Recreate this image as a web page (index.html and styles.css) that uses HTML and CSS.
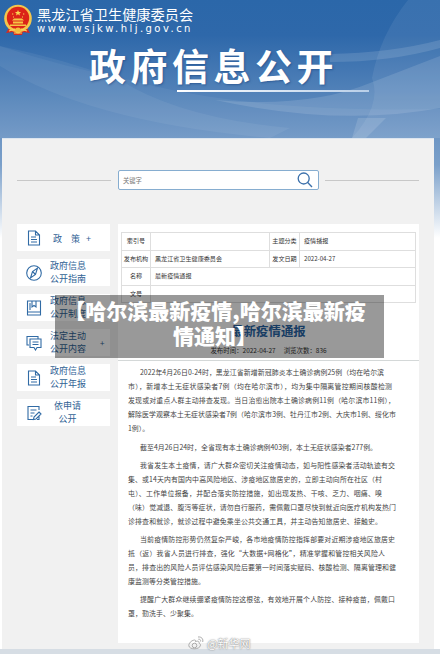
FILE: index.html
```html
<!DOCTYPE html>
<html lang="zh-CN">
<head>
<meta charset="utf-8">
<title>政府信息公开</title>
<link rel="stylesheet" href="styles.css">
</head>
<body>
<div class="page">
  <header class="header">
    <svg class="waves" viewBox="0 0 440 138" preserveAspectRatio="none">
      <path d="M0 46Q60 66 130 80Q250 113 440 109V138H0Z" fill="#fff" opacity=".05"/>
      <path d="M0 46Q60 58 120 80Q180 118 290 128L270 138Q90 122 0 66Z" fill="#fff" opacity=".06"/>
      <path d="M408 0H440V138H352Q382 105 372 78Q380 35 408 0Z" fill="#fff" opacity=".07"/>
      <path d="M330 54Q390 53 440 40V48Q390 62 330 62Z" fill="#fff" opacity=".12"/>
      <path d="M215 100Q310 108 370 83L440 56V108Q340 127 215 100Z" fill="#fff" opacity=".12"/>
      <path d="M352 138L358 118L386 118L366 138Z" fill="#fff" opacity=".13"/>
    </svg>
    <div class="brand">
      <svg class="emblem" viewBox="0 0 30 32">
        <path d="M6 24L3 29L10 28L11 31H19L20 28L27 29L24 24Z" fill="#d8281e"/>
        <circle cx="15" cy="14.5" r="13.8" fill="#f4c64c"/>
        <circle cx="15" cy="14" r="11.2" fill="#dc2418"/>
        <path d="M15 6l.9 2h2.2l-1.7 1.4.6 2.1-2-1.2-2 1.2.6-2.1L11.900 8h2.200z" fill="#f9d650"/>
        <path d="M9 16.500L11 14.500H19L21 16.500ZM10 17.500H20V19.500H10ZM7 20.500H23V22H7Z" fill="#f6c543"/>
        <path d="M9 10h1.300M20 10h1.300M10 13h1M19 13h1" stroke="#f9d650"/>
        <circle cx="15" cy="26.500" r="3" fill="#f3be3e"/>
        <path d="M6 27L12 25M24 27L18 25M11 29H19" stroke="#f8d35b" stroke-width="1.200"/>
      </svg>
      <div class="brand-text">
        <div class="org">黑龙江省卫生健康委员会</div>
        <div class="url">www.wsjkw.hlj.gov.cn</div>
      </div>
    </div>
    <h1>政府信息公开</h1>
    <div class="underline"></div>
  </header>

  <main class="panel">
    <div class="search-row">
      <i class="rule"></i>
      <div class="search"><span>关键字</span>
        <svg viewBox="0 0 16 16"><circle cx="6.700" cy="6.500" r="5.500"/><path d="M10.700 10.500L15 15"/></svg>
      </div>
      <i class="rule"></i>
    </div>

    <div class="columns">
      <nav class="side">
        <a class="item"><svg viewBox="0 0 16 16"><path d="M2.500 1h7l4 4v10h-11zM9.500 1v4h4M5 7h5M5 9.500h6M5 12h6"/></svg><span class="label spaced">政<b></b>策<b></b>+</span></a>
        <a class="item"><svg viewBox="0 0 16 16"><circle cx="8" cy="8" r="7.300"/><path d="M11.500 3L9.500 9.500L4.500 13L6.500 6.500ZM6.500 6.500L9.500 9.500"/></svg><span class="label">政府信息<br>公开指南</span></a>
        <a class="item"><svg viewBox="0 0 16 16"><path d="M1.500 1h13v14h-13zM1.500 12h13M6 1v6l2-1.500L10 7V1M4 3v7"/></svg><span class="label">政府信息<br>公开制度</span></a>
        <a class="item"><svg viewBox="0 0 16 16"><path d="M3 10H1V1.500h11V4M4 4h11v8.500h-4L9.500 15L8 12.500H4zM6.500 7h6M6.500 9.500h6"/></svg><span class="label">法定主动<br>公开内容</span><em>+</em></a>
        <a class="item"><svg viewBox="0 0 16 16"><path d="M2.500 1h7l4 4v10h-11zM9.500 1v4h4M5 7h5M5 9.500h6M5 12h6"/></svg><span class="label">政府信息<br>公开年报</span></a>
        <a class="item"><svg viewBox="0 0 16 16"><path d="M13 5V1.500H2V14.500h6M4.500 5h6M4.500 8h4M4.500 11h2M13 7l2 2-5 5-2.500.5.500-2.500zM13 11v3.500h-2"/></svg><span class="label mid">依申请<br>公开</span></a>
      </nav>

      <article class="doc">
        <table class="meta">
          <colgroup><col class="c1"><col class="c2"><col class="c3"><col class="c4"></colgroup>
          <tr><th>索引号</th><td></td><th>主题分类</th><td>疫情播报</td></tr>
          <tr><th>发布机构</th><td>黑龙江省卫生健康委员会</td><th>发文日期</th><td>2022-04-27</td></tr>
          <tr><th>名称</th><td colspan="3">最新疫情通报</td></tr>
          <tr><th>文号</th><td colspan="3"></td></tr>
        </table>
        <h2>最新疫情通报</h2>
        <div class="info"><span>发布时间：2022-04-27</span><span>浏览次数：836</span></div>
        <div class="body">
          <p><span class="first" style="width:244px">2022年4月26日0-24时，黑龙江省新增新冠肺炎本土确诊病例25例（均在哈尔滨</span><span style="width:264px">市），新增本土无症状感染者7例（均在哈尔滨市），均为集中隔离管控期间核酸检测</span><span style="width:267px">发现或对重点人群主动排查发现。当日治愈出院本土确诊病例11例（哈尔滨市11例），</span><span style="width:268px">解除医学观察本土无症状感染者7例（哈尔滨市3例、牡丹江市2例、大庆市1例、绥化市</span><span class="short">1例）。</span></p>
          <p><span class="first" style="width:237px">截至4月26日24时，全省现有本土确诊病例403例，本土无症状感染者277例。</span></p>
          <p><span class="first" style="width:255px">我省发生本土疫情，请广大群众密切关注疫情动态，如与阳性感染者活动轨迹有交</span><span style="width:254px">集、或14天内有国内中高风险地区、涉疫地区旅居史的，立即主动向所在社区（村</span><span style="width:254px">屯）、工作单位报备，并配合落实防控措施，如出现发热、干咳、乏力、咽痛、嗅</span><span style="width:268px">（味）觉减退、腹泻等症状，请勿自行服药，需佩戴口罩尽快到就近向医疗机构发热门</span><span style="width:254px">诊排查和就诊，就诊过程中避免乘坐公共交通工具，并主动告知旅居史、接触史。</span></p>
          <p><span class="first" style="width:255px">当前疫情防控形势仍然复杂严峻，各市地疫情防控指挥部要对近期涉疫地区旅居史</span><span style="width:257px">抵（返）我省人员进行排查，强化“大数据+网格化”，精准掌握和管控相关风险人</span><span style="width:268px">员，排查出的风险人员评估感染风险后要第一时间落实赋码、核酸检测、隔离管理和健</span><span style="width:77px">康监测等分类管控措施。</span></p>
          <p><span class="first" style="width:255px">提醒广大群众继续绷紧疫情防控这根弦，有效地开展个人防控、接种疫苗，佩戴口</span><span style="width:70px">罩，勤洗手、少聚集。</span></p>
        </div>
      </article>
    </div>
  </main>
  <footer></footer>

  <div class="banner">【哈尔滨最新疫情,哈尔滨最新疫<br>情通知】</div>
  <div class="mark">
    <svg viewBox="0 0 16 14"><path d="M6.500 4C3 4.500.700 7.500.800 9.600c.4 4.500 11.200 4.200 11.700-.4 0-1.600-1.500-2-1.500-2C11.500 4.500 9 5 7.500 5.700 7.800 4.500 7.500 4 6.500 4z"/><circle cx="6.500" cy="9.500" r="2.300"/><path d="M10 1c3.500-.5 5.500 2 4.700 5M10.300 3.200c1.700-.2 2.600.8 2.300 2.300"/></svg>
    <span>@新华网</span>
  </div>
</div>
</body>
</html>
```

FILE: styles.css
```css
* { box-sizing: border-box; }
body {
  margin: 0;
  font-family: "Noto Sans CJK SC", sans-serif;
  background: #fff;
}
.page {
  position: relative;
  width: 440px;
  height: 654px;
  overflow: hidden;
  background: linear-gradient(#2b67a9 0, #2e68aa 35px, #6e96c4 138px, #7ba0ca 165px, #fff 238px);
}
.header { position: relative; height: 138px; }
.waves { position: absolute; inset: 0; width: 440px; height: 138px; }
.brand { position: relative; display: flex; height: 37px; padding: 4px 0 0 3px; }
.emblem { width: 30px; height: 32px; }
.brand-text { margin-left: 4px; color: #fff; white-space: nowrap; }
.org { margin-top: 1px; font-size: 14.2px; line-height: 18px; }
.url {
  font-family: "DejaVu Sans", sans-serif;
  font-size: 10px;
  line-height: 12px;
  letter-spacing: 2.450px;
}
h1 {
  position: relative;
  margin: 4px 0 0 89px;
  font-size: 37px;
  line-height: 48px;
  letter-spacing: 4.500px;
  font-weight: 700;
  color: #fff;
  text-shadow: 1px 1px 2px rgba(20, 60, 120, .5);
  white-space: nowrap;
}
.underline {
  position: relative;
  width: 192px;
  height: 2px;
  margin: 1px 0 0 177px;
  background: linear-gradient(90deg, #fff, #b9cfe8);
}
.panel {
  width: 432px;
  height: 511px;
  margin-left: 2px;
  padding: 32px 15px 0;
  background: #f1f1f1;
  border-top: 1px solid #dce5ef;
}
.search-row { display: flex; align-items: center; height: 20px; margin-top: -1px; }
.rule { width: 94px; height: 1px; background: #c8c8c8; margin-top: 1px; }
.search {
  display: flex;
  align-items: center;
  justify-content: space-between;
  width: 201px;
  height: 20px;
  margin: 0 6px 0 7px;
  padding: 0 5px 0 4px;
  border: 1px solid #86add0;
  border-radius: 2px;
  background: #fff;
  font-size: 6.300px;
  color: #777;
}
.search svg { width: 16px; height: 16px; fill: none; stroke: #3b70ab; stroke-width: 1.300; }
.columns { display: flex; gap: 8px; margin-top: 34px; }
.side { display: flex; flex-direction: column; gap: 8px; width: 93px; }
.item {
  display: flex;
  align-items: center;
  height: 27px;
  padding-left: 9px;
  background: #fff;
  color: #316395;
}
.item svg { width: 16px; height: 16px; fill: none; stroke: #316ba5; stroke-width: 1.100; }
.label { margin: -2px 0 0 8px; font-size: 9px; line-height: 13px; white-space: nowrap; }
.label b { display: inline-block; width: 9px; }
.label.spaced { margin: 1px 0 0 11px; }
.spaced b + b { width: 6px; }
.label.mid { text-align: center; margin-left: 12px; }
.item em { margin-left: 14px; font-size: 8px; font-style: normal; }
.doc { width: 301px; height: 419px; background: #fff; padding-top: 8px; }
.meta {
  width: 295px;
  margin-left: 3px;
  border-collapse: collapse;
  table-layout: fixed;
  font-size: 6.100px;
  line-height: 8px;
  color: #333;
}
.c1 { width: 29px; }
.c2 { width: 119px; }
.c3 { width: 30px; }
.meta tr { height: 17.600px; }
.meta th, .meta td { padding: 0; border: 1px solid #dedede; font-weight: 400; white-space: nowrap; }
.meta td { padding-left: 4px; }
h2 {
  margin: 19px 0 0;
  text-align: center;
  font-size: 12.400px;
  line-height: 18px;
  font-weight: 700;
  color: #2865a5;
}
.info {
  display: flex;
  justify-content: center;
  gap: 8px;
  height: 21px;
  padding-top: 5px;
  border-bottom: 1px solid #d4d8d8;
  font-size: 6.450px;
  line-height: 12px;
  color: #333;
}
.body { padding: 4px 0 0 10px; font-size: 6.900px; line-height: 14px; color: #444; }
.body p { margin: 0 0 4.200px; }
.body p span { display: block; height: 14px; text-align-last: justify; white-space: nowrap; }
.body .first { margin-left: 12px; }
.body p .short { text-align-last: left; }
footer { height: 5px; background: #d6dde4; }
.banner {
  position: absolute;
  left: 55px;
  top: 295px;
  width: 329px;
  height: 63px;
  padding: 3px 9px 0 0;
  background: rgba(0, 0, 0, .4);
  color: #fff;
  font-size: 21px;
  font-weight: 900;
  line-height: 25px;
  text-align: center;
  white-space: nowrap;
}
.mark {
  position: absolute;
  left: 188px;
  top: 635px;
  display: flex;
  align-items: center;
  gap: 3px;
  height: 16px;
  font-size: 11px;
  color: #fff;
  text-shadow: 0 0 1px #777, 0 0 2px #999;
}
.mark svg { width: 16px; height: 14px; fill: none; stroke: #aaa; }
```
